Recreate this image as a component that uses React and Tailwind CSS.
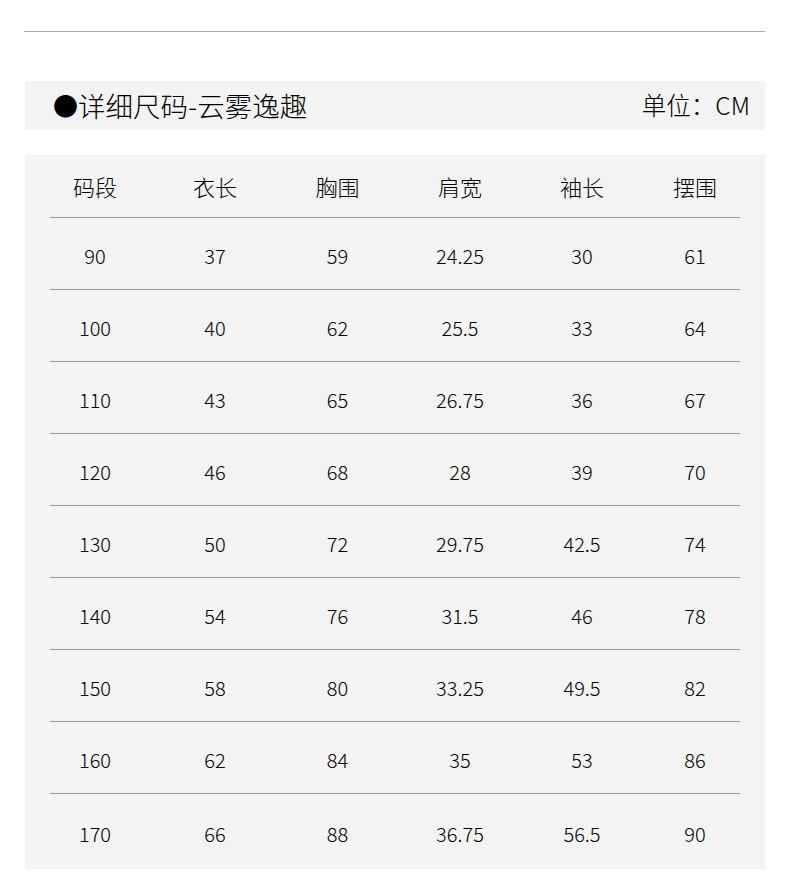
import React from "react";

const headers = ["码段", "衣长", "胸围", "肩宽", "袖长", "摆围"];
const rows = [
  ["90", "37", "59", "24.25", "30", "61"],
  ["100", "40", "62", "25.5", "33", "64"],
  ["110", "43", "65", "26.75", "36", "67"],
  ["120", "46", "68", "28", "39", "70"],
  ["130", "50", "72", "29.75", "42.5", "74"],
  ["140", "54", "76", "31.5", "46", "78"],
  ["150", "58", "80", "33.25", "49.5", "82"],
  ["160", "62", "84", "35", "53", "86"],
  ["170", "66", "88", "36.75", "56.5", "90"],
];

const grid = "grid grid-cols-[90px_150px_95px_150px_94px_110px] items-center";

function Cells({ cells, cls }) {
  return cells.map((c, i) => (
    <div key={i} className={`text-center ${i === 5 ? "pl-[22px]" : ""} ${cls}`}>
      {c}
    </div>
  ));
}

export default function App() {
  return (
    <div
      className="w-[790px] h-[879px] bg-white text-black overflow-hidden font-light"
      style={{ fontFamily: '"Noto Sans CJK SC", "Noto Sans", sans-serif' }}
    >
      <div className="pt-[31px] pl-[24px] pr-[25px]">
        <div className="h-px bg-[#a3a3a3]" />
      </div>

      <div className="mt-[49px] mx-[25px] h-[49px] bg-[#f3f3f3] flex items-center justify-between pl-[28px] pr-[15px]">
        <div className="text-[27.5px] leading-none flex items-center">
          <span className="text-[25px]">●</span>
          <span>详细尺码-云雾逸趣</span>
        </div>
        <div className="text-[24.5px] leading-none">单位：CM</div>
      </div>

      <div className="mt-[25px] mx-[25px] h-[714px] bg-[#f3f3f3] px-[25px]">
        <div className={`${grid} h-[63px] border-b border-[#9a9a9a]`}>
          <Cells cells={headers} cls="text-[22px] leading-none" />
        </div>
        {rows.map((r, ri) => (
          <div
            key={ri}
            className={`${grid} ${
              ri === rows.length - 1 ? "h-[74px]" : "h-[72px] border-b border-[#9a9a9a]"
            }`}
          >
            <Cells cells={r} cls="text-[20px] leading-none pt-[5px]" />
          </div>
        ))}
      </div>
    </div>
  );
}
